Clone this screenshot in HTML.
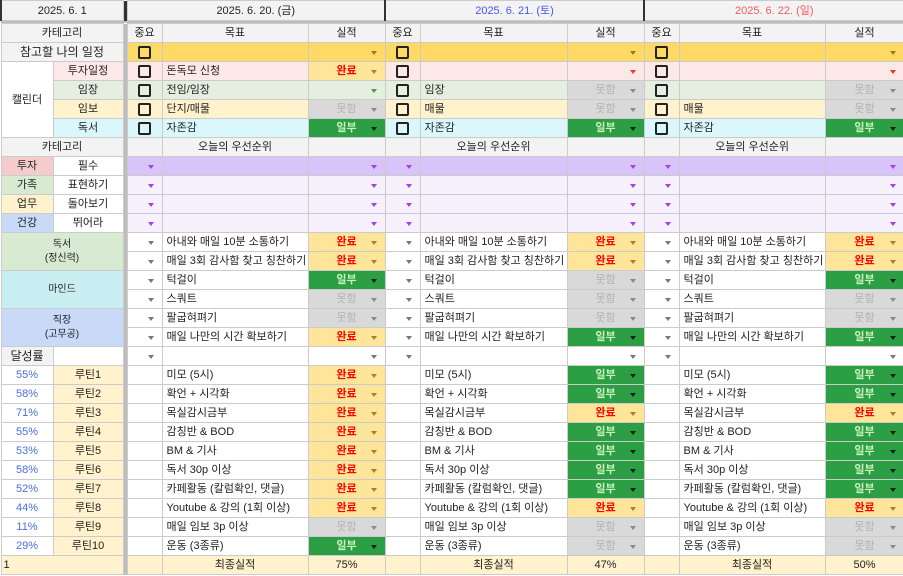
<!DOCTYPE html>
<html><head><meta charset="utf-8"><style>
html,body{margin:0;padding:0;background:#fff;width:903px;height:576px;overflow:hidden}
table{border-collapse:collapse;table-layout:fixed;width:903px;font-family:"Liberation Sans","Noto Sans CJK KR",sans-serif;font-size:11px;color:#222}
td{border:1px solid #cbcbcb;padding:0;overflow:hidden;white-space:nowrap;height:18px;line-height:16px;position:relative;--a:#777}
tr{height:19px}
.c{text-align:center}
.t{padding-left:4px}
.h{background:#f3f3f3}
.g{background:#bdbdbd;border:none}
.bx{display:inline-block;width:13px;height:13px;border:2px solid #222;border-radius:2px;box-sizing:border-box;vertical-align:middle}
.ar::after{content:"";position:absolute;right:8px;top:8px;border-left:3.5px solid transparent;border-right:3.5px solid transparent;border-top:4px solid var(--a)}
.r1 td{background:#ffd966;--a:#9a7a20}
.r2 td{background:#fde8e8;--a:#e33}
.r3 td{background:#e5efe0;--a:#4a9a4a}
.r4 td{background:#fff2cc}
.r5 td{background:#daf7fc}
.pp td{background:#d8c4f8;--a:#a040f0}
.pl td{background:#f7f0fd;--a:#a040f0}
tr td.ok{background:#ffe599;color:#f00;font-weight:bold;--a:#a8841f}
tr td.pt{background:#2c9f45;color:#cdf0c0;font-weight:bold;--a:#152015}
tr td.no{background:#d9d9d9;color:#b3b3b3;--a:#8a8a8a}
.r1 td.g,.r2 td.g,.r3 td.g,.r4 td.g,.r5 td.g,.pp td.g,.pl td.g{background:#bdbdbd}
td.w{background:#fff!important}
td.hh{background:#f3f3f3!important}
.pc{color:#4a6ee0}
.y{background:#fff2cc!important}
.dt td{background:#f3f3f3;height:19px}
.bl{border-left:2px solid #333!important}
</style></head><body>
<table>
<colgroup><col style="width:52px"><col style="width:70px"><col style="width:4px"><col style="width:35px"><col style="width:146px"><col style="width:77px"><col style="width:35px"><col style="width:147px"><col style="width:77px"><col style="width:35px"><col style="width:146px"><col style="width:79px"></colgroup>
<tr class="dt" style="height:20px"><td colspan="2" class="c bl">2025. 6. 1</td><td class="g" style="background:#333"></td><td colspan="3" class="c">2025. 6. 20. (금)</td><td colspan="3" class="c bl" style="color:#4a55ee">2025. 6. 21. (토)</td><td colspan="3" class="c bl" style="color:#f45a5a">2025. 6. 22. (일)</td></tr>
<tr style="height:2px"><td colspan="12" style="background:#bdbdbd;border:none;height:2px;line-height:0"></td></tr>
<tr><td colspan="2" class="c h">카테고리</td><td class="g" rowspan="29"></td><td class="c h">중요</td><td class="c h">목표</td><td class="c h">실적</td><td class="c h">중요</td><td class="c h">목표</td><td class="c h">실적</td><td class="c h">중요</td><td class="c h">목표</td><td class="c h">실적</td></tr>
<tr class="r1"><td colspan="2" class="c hh" style="font-size:12px">참고할 나의 일정</td><td class="c"><i class="bx"></i></td><td></td><td class="ar"></td><td class="c"><i class="bx"></i></td><td></td><td class="ar"></td><td class="c"><i class="bx"></i></td><td></td><td class="ar"></td></tr>
<tr class="r2"><td rowspan="4" class="c w">캘린더</td><td class="c">투자일정</td><td class="c"><i class="bx"></i></td><td class="t">돈독모 신청</td><td class="c ar ok">완료</td><td class="c"><i class="bx"></i></td><td></td><td class="ar"></td><td class="c"><i class="bx"></i></td><td></td><td class="ar"></td></tr>
<tr class="r3"><td class="c">임장</td><td class="c"><i class="bx"></i></td><td class="t">전임/임장</td><td class="ar"></td><td class="c"><i class="bx"></i></td><td class="t">임장</td><td class="c ar no">못함</td><td class="c"><i class="bx"></i></td><td></td><td class="c ar no">못함</td></tr>
<tr class="r4"><td class="c">임보</td><td class="c"><i class="bx"></i></td><td class="t">단지/매물</td><td class="c ar no">못함</td><td class="c"><i class="bx"></i></td><td class="t">매물</td><td class="c ar no">못함</td><td class="c"><i class="bx"></i></td><td class="t">매물</td><td class="c ar no">못함</td></tr>
<tr class="r5"><td class="c">독서</td><td class="c"><i class="bx"></i></td><td class="t">자존감</td><td class="c ar pt">일부</td><td class="c"><i class="bx"></i></td><td class="t">자존감</td><td class="c ar pt">일부</td><td class="c"><i class="bx"></i></td><td class="t">자존감</td><td class="c ar pt">일부</td></tr>
<tr><td colspan="2" class="c h">카테고리</td><td class="h"></td><td class="c h">오늘의 우선순위</td><td class="h"></td><td class="h"></td><td class="c h">오늘의 우선순위</td><td class="h"></td><td class="h"></td><td class="c h">오늘의 우선순위</td><td class="h"></td></tr>
<tr class="pp"><td class="c" style="background:#f4cccc">투자</td><td class="c w">필수</td><td class="ar"></td><td></td><td class="ar"></td><td class="ar"></td><td></td><td class="ar"></td><td class="ar"></td><td></td><td class="ar"></td></tr>
<tr class="pl"><td class="c" style="background:#d9ead3">가족</td><td class="c w">표현하기</td><td class="ar"></td><td></td><td class="ar"></td><td class="ar"></td><td></td><td class="ar"></td><td class="ar"></td><td></td><td class="ar"></td></tr>
<tr class="pl"><td class="c" style="background:#fff2cc">업무</td><td class="c w">돌아보기</td><td class="ar"></td><td></td><td class="ar"></td><td class="ar"></td><td></td><td class="ar"></td><td class="ar"></td><td></td><td class="ar"></td></tr>
<tr class="pl"><td class="c" style="background:#c9daf8">건강</td><td class="c w">뛰어라</td><td class="ar"></td><td></td><td class="ar"></td><td class="ar"></td><td></td><td class="ar"></td><td class="ar"></td><td></td><td class="ar"></td></tr>
<tr><td colspan="2" rowspan="2" class="c" style="background:#d9ead3;line-height:14px;font-size:10px">독서<br>(정신력)</td><td class="ar"></td><td class="t">아내와 매일 10분 소통하기</td><td class="c ar ok">완료</td><td class="ar"></td><td class="t">아내와 매일 10분 소통하기</td><td class="c ar ok">완료</td><td class="ar"></td><td class="t">아내와 매일 10분 소통하기</td><td class="c ar ok">완료</td></tr>
<tr><td class="ar"></td><td class="t">매일 3회 감사함 찾고 칭찬하기</td><td class="c ar ok">완료</td><td class="ar"></td><td class="t">매일 3회 감사함 찾고 칭찬하기</td><td class="c ar ok">완료</td><td class="ar"></td><td class="t">매일 3회 감사함 찾고 칭찬하기</td><td class="c ar ok">완료</td></tr>
<tr><td colspan="2" rowspan="2" class="c" style="background:#c8eef2;font-size:10px">마인드</td><td class="ar"></td><td class="t">턱걸이</td><td class="c ar pt">일부</td><td class="ar"></td><td class="t">턱걸이</td><td class="c ar no">못함</td><td class="ar"></td><td class="t">턱걸이</td><td class="c ar pt">일부</td></tr>
<tr><td class="ar"></td><td class="t">스쿼트</td><td class="c ar no">못함</td><td class="ar"></td><td class="t">스쿼트</td><td class="c ar no">못함</td><td class="ar"></td><td class="t">스쿼트</td><td class="c ar no">못함</td></tr>
<tr><td colspan="2" rowspan="2" class="c" style="background:#c9daf8;line-height:14px;font-size:10px">직장<br>(고무공)</td><td class="ar"></td><td class="t">팔굽혀펴기</td><td class="c ar no">못함</td><td class="ar"></td><td class="t">팔굽혀펴기</td><td class="c ar no">못함</td><td class="ar"></td><td class="t">팔굽혀펴기</td><td class="c ar no">못함</td></tr>
<tr><td class="ar"></td><td class="t">매일 나만의 시간 확보하기</td><td class="c ar ok">완료</td><td class="ar"></td><td class="t">매일 나만의 시간 확보하기</td><td class="c ar pt">일부</td><td class="ar"></td><td class="t">매일 나만의 시간 확보하기</td><td class="c ar pt">일부</td></tr>
<tr><td class="c h" style="font-size:12px">달성률</td><td></td><td class="ar"></td><td></td><td class="ar"></td><td class="ar"></td><td></td><td class="ar"></td><td class="ar"></td><td></td><td class="ar"></td></tr>
<tr><td class="c pc">55%</td><td class="c y">루틴1</td><td></td><td class="t">미모 (5시)</td><td class="c ar ok">완료</td><td></td><td class="t">미모 (5시)</td><td class="c ar pt">일부</td><td></td><td class="t">미모 (5시)</td><td class="c ar pt">일부</td></tr>
<tr><td class="c pc">58%</td><td class="c y">루틴2</td><td></td><td class="t">확언 + 시각화</td><td class="c ar ok">완료</td><td></td><td class="t">확언 + 시각화</td><td class="c ar pt">일부</td><td></td><td class="t">확언 + 시각화</td><td class="c ar pt">일부</td></tr>
<tr><td class="c pc">71%</td><td class="c y">루틴3</td><td></td><td class="t">목실감시금부</td><td class="c ar ok">완료</td><td></td><td class="t">목실감시금부</td><td class="c ar ok">완료</td><td></td><td class="t">목실감시금부</td><td class="c ar ok">완료</td></tr>
<tr><td class="c pc">55%</td><td class="c y">루틴4</td><td></td><td class="t">감칭반 &amp; BOD</td><td class="c ar ok">완료</td><td></td><td class="t">감칭반 &amp; BOD</td><td class="c ar pt">일부</td><td></td><td class="t">감칭반 &amp; BOD</td><td class="c ar pt">일부</td></tr>
<tr><td class="c pc">53%</td><td class="c y">루틴5</td><td></td><td class="t">BM &amp; 기사</td><td class="c ar ok">완료</td><td></td><td class="t">BM &amp; 기사</td><td class="c ar pt">일부</td><td></td><td class="t">BM &amp; 기사</td><td class="c ar pt">일부</td></tr>
<tr><td class="c pc">58%</td><td class="c y">루틴6</td><td></td><td class="t">독서 30p 이상</td><td class="c ar ok">완료</td><td></td><td class="t">독서 30p 이상</td><td class="c ar pt">일부</td><td></td><td class="t">독서 30p 이상</td><td class="c ar pt">일부</td></tr>
<tr><td class="c pc">52%</td><td class="c y">루틴7</td><td></td><td class="t">카페활동 (칼럼확인, 댓글)</td><td class="c ar ok">완료</td><td></td><td class="t">카페활동 (칼럼확인, 댓글)</td><td class="c ar pt">일부</td><td></td><td class="t">카페활동 (칼럼확인, 댓글)</td><td class="c ar pt">일부</td></tr>
<tr><td class="c pc">44%</td><td class="c y">루틴8</td><td></td><td class="t">Youtube &amp; 강의 (1회 이상)</td><td class="c ar ok">완료</td><td></td><td class="t">Youtube &amp; 강의 (1회 이상)</td><td class="c ar ok">완료</td><td></td><td class="t">Youtube &amp; 강의 (1회 이상)</td><td class="c ar ok">완료</td></tr>
<tr><td class="c pc">11%</td><td class="c y">루틴9</td><td></td><td class="t">매일 임보 3p 이상</td><td class="c ar no">못함</td><td></td><td class="t">매일 임보 3p 이상</td><td class="c ar no">못함</td><td></td><td class="t">매일 임보 3p 이상</td><td class="c ar no">못함</td></tr>
<tr><td class="c pc">29%</td><td class="c y">루틴10</td><td></td><td class="t">운동 (3종류)</td><td class="c ar pt">일부</td><td></td><td class="t">운동 (3종류)</td><td class="c ar no">못함</td><td></td><td class="t">운동 (3종류)</td><td class="c ar no">못함</td></tr>
<tr><td colspan="2" class="y" style="padding-left:2px">1</td><td class="y"></td><td class="c y">최종실적</td><td class="c y">75%</td><td class="y"></td><td class="c y">최종실적</td><td class="c y">47%</td><td class="y"></td><td class="c y">최종실적</td><td class="c y">50%</td></tr>
</table>
</body></html>
